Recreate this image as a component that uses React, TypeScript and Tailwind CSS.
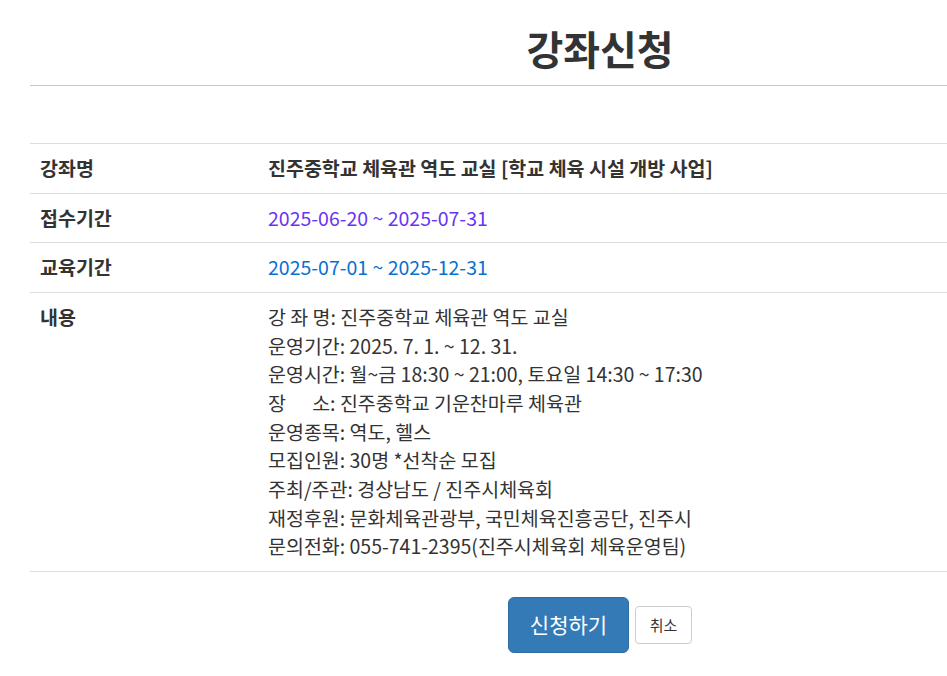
const font = "font-['Noto_Sans_CJK_KR','Noto_Sans',sans-serif]"

const lines = [
  '강 좌 명: 진주중학교 체육관 역도 교실',
  '운영기간: 2025. 7. 1. ~ 12. 31.',
  '운영시간: 월~금 18:30 ~ 21:00, 토요일 14:30 ~ 17:30',
  '장\u00a0\u00a0\u00a0\u00a0\u00a0\u00a0소: 진주중학교 기운찬마루 체육관',
  '운영종목: 역도, 헬스',
  '모집인원: 30명 *선착순 모집',
  '주최/주관: 경상남도 / 진주시체육회',
  '재정후원: 문화체육관광부, 국민체육진흥공단, 진주시',
  '문의전화: 055-741-2395(진주시체육회 체육운영팀)',
]

function Row({ label, children }: { label: string; children: React.ReactNode }) {
  return (
    <tr className="border-b border-[#dddddd]">
      <th className="w-[228px] px-[10px] py-[10px] text-left align-top font-bold">{label}</th>
      <td className="px-[10px] py-[10px] align-top">{children}</td>
    </tr>
  )
}

export default function App() {
  return (
    <div className={`${font} w-full overflow-hidden bg-white text-[#333333]`}>
      <div className="ml-[30px] w-[1140px] pb-[24px]">
        <h1 className="border-b border-[#c8c8c8] pt-[23px] pb-[12px] text-center text-[40px] font-bold leading-[50px]">
          강좌신청
        </h1>
        <table className="mt-[57px] w-full border-collapse border-t border-[#dddddd] text-[19.5px] leading-[28.65px]">
          <tbody>
            <Row label="강좌명">
              <span className="font-bold">진주중학교 체육관 역도 교실 [학교 체육 시설 개방 사업]</span>
            </Row>
            <Row label="접수기간">
              <span className="text-[#6a34f5]">2025-06-20 ~ 2025-07-31</span>
            </Row>
            <Row label="교육기간">
              <span className="text-[#0a6fd0]">2025-07-01 ~ 2025-12-31</span>
            </Row>
            <Row label="내용">
              {lines.map((l) => (
                <div key={l}>{l}</div>
              ))}
            </Row>
          </tbody>
        </table>
        <div className="mt-[25px] flex items-center justify-center gap-[6px]">
          <button className="h-[56px] w-[121px] rounded-[6px] border border-[#2e6da4] bg-[#337ab7] text-[21px] text-white">
            신청하기
          </button>
          <button className="h-[38px] w-[57px] rounded-[4px] border border-[#cccccc] bg-white text-[15px] text-[#333333]">
            취소
          </button>
        </div>
      </div>
    </div>
  )
}
